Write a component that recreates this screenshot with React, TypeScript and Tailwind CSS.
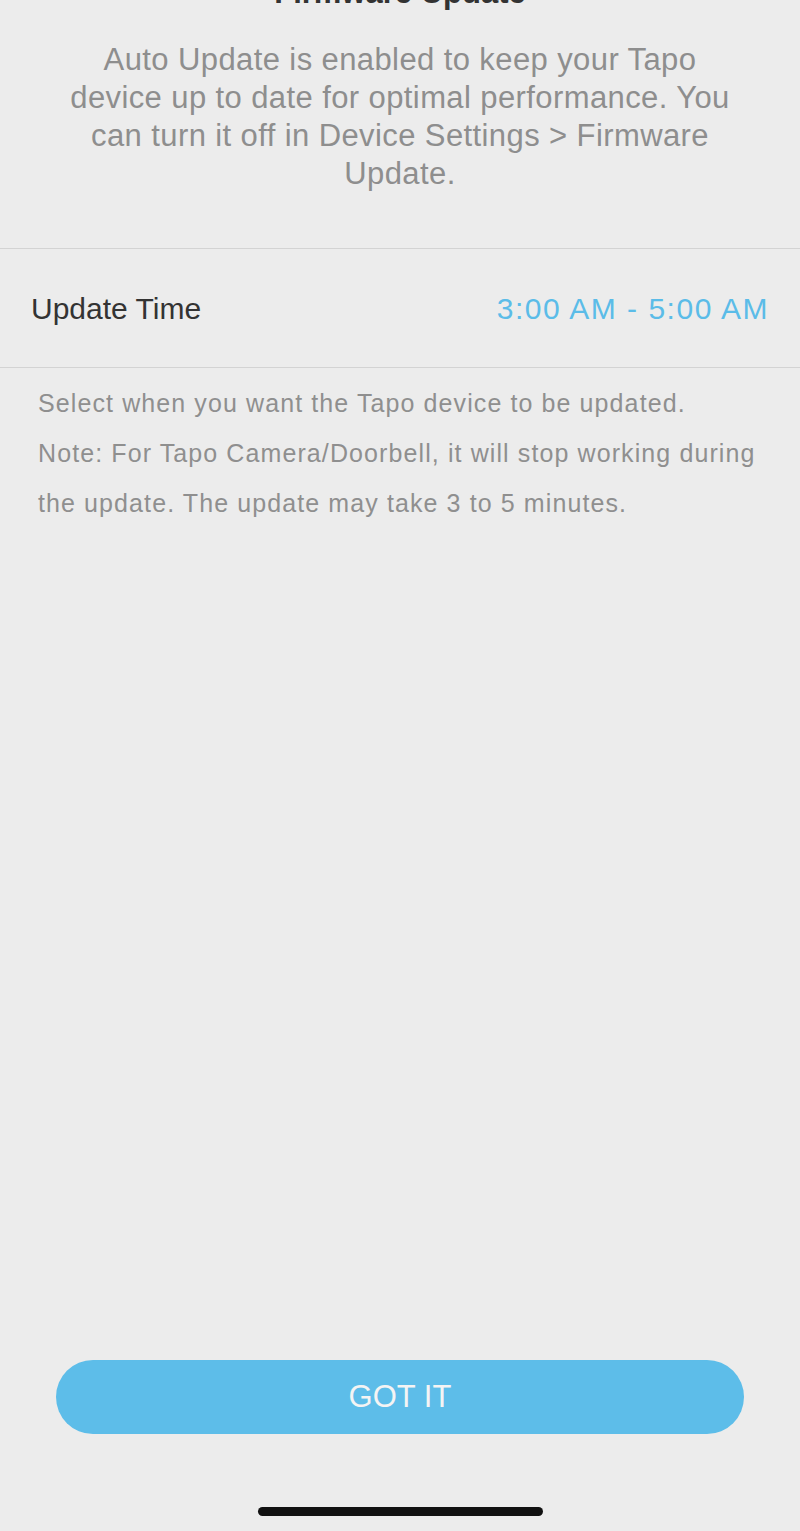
export default function App() {
  return (
    <div
      className="flex h-[1531px] w-full flex-col overflow-hidden bg-[#ececec]"
      style={{ fontFamily: '"Liberation Sans", Arial, sans-serif' }}
    >
      <h1 className="mt-[-25px] text-center text-[31px] font-bold leading-[36px] text-[#333333]">Firmware Update</h1>
      <p className="mt-[30px] px-4 text-center text-[31px] leading-[38px] tracking-[0.4px] text-[#8e8e8e]">
        Auto Update is enabled to keep your Tapo
        <br />
        device up to date for optimal performance. You
        <br />
        can turn it off in Device Settings &gt; Firmware
        <br />
        Update.
      </p>

      <div className="mt-[55px] flex h-[120px] items-center justify-between border-y border-[#d3d3d3] px-[31px]">
        <span className="text-[30px] text-[#333333]">Update Time</span>
        <span className="text-[30px] tracking-[1.5px] text-[#5bbce8]">3:00 AM - 5:00 AM</span>
      </div>

      <div className="px-[38px] pt-[10px] text-[25px] leading-[50px] tracking-[1.1px] text-[#8f8f8f]">
        <p>Select when you want the Tapo device to be updated.</p>
        <p>Note: For Tapo Camera/Doorbell, it will stop working during the update. The update may take 3 to 5 minutes.</p>
      </div>

      <div className="flex-1" />

      <div className="px-[56px]">
        <button className="flex h-[74px] w-full items-center justify-center rounded-full bg-[#5dbde9] text-[31px] text-[#f4f4f4]">
          GOT IT
        </button>
      </div>

      <div className="mt-[73px] mb-[15px] flex justify-center">
        <div className="h-[9px] w-[285px] rounded-full bg-[#111111]" />
      </div>
    </div>
  );
}
